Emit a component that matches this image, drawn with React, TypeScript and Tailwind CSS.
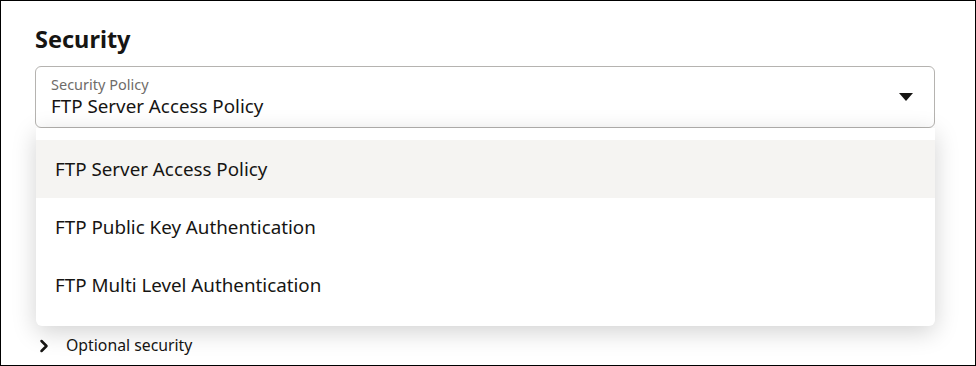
import { ChevronRight } from "lucide-react";

const options = [
  "FTP Server Access Policy",
  "FTP Public Key Authentication",
  "FTP Multi Level Authentication",
];

export default function App() {
  return (
    <div className="relative h-[366px] w-[976px] overflow-hidden border border-black bg-white font-['Noto_Sans',sans-serif] text-[#161513]">
      <div className="pl-[34px] pr-[40px] pt-[22px]">
        <h2 className="text-[23.5px] font-bold leading-[32px]">Security</h2>
        <div className="relative mt-[11px]">
          <div className="flex h-[62px] items-center rounded-[6px] border border-[#b5b3b0] bg-white pl-[15px] pr-[20px]">
            <div className="flex flex-1 flex-col pt-[1px]">
              <span className="text-[14.5px] leading-[17px] text-[#6f6c69]">Security Policy</span>
              <span className="text-[18.8px] leading-[26px]">FTP Server Access Policy</span>
            </div>
            <svg width="16" height="10" viewBox="0 0 16 10">
              <path d="M1 1h14L8 9z" fill="#161513" />
            </svg>
          </div>
          <div className="absolute left-[1px] right-0 top-[62px] z-10 rounded-b-[6px] bg-white pt-[12px] pb-[12px] shadow-[0_6px_24px_rgba(0,0,0,0.18)]">
            {options.map((o, i) => (
              <div
                key={o}
                className={`flex h-[58px] items-center pl-[19px] text-[18.8px] ${i === 0 ? "bg-[#f5f4f2]" : ""}`}
              >
                {o}
              </div>
            ))}
          </div>
        </div>
        <div className="mt-[206px] flex items-center gap-[12px]">
          <ChevronRight size={20} strokeWidth={3} className="-ml-[1px]" />
          <span className="text-[15.8px]">Optional security</span>
        </div>
      </div>
    </div>
  );
}
